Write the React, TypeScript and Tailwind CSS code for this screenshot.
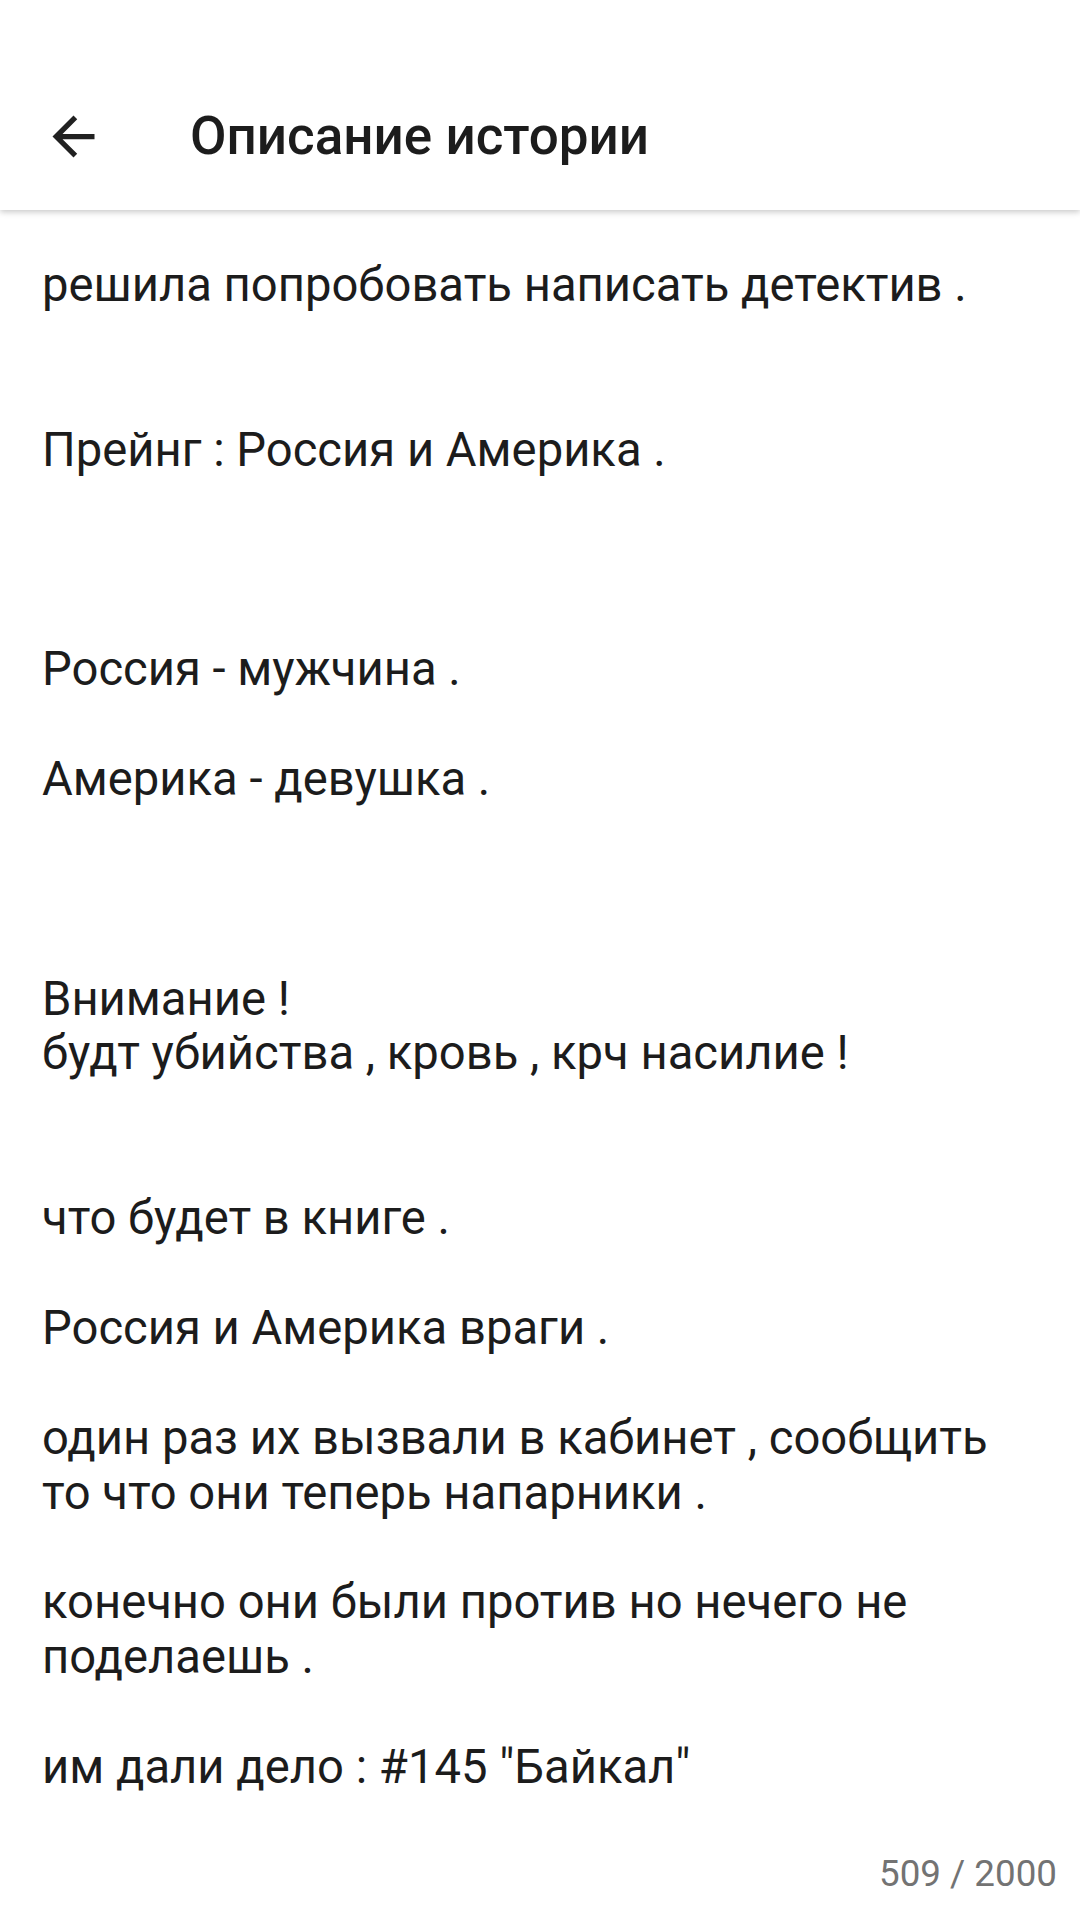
import React from "react";

const lines: string[] = [
  "решила попробовать написать детектив .",
  "",
  "",
  "Прейнг : Россия и Америка .",
  "",
  "",
  "",
  "Россия - мужчина .",
  "",
  "Америка - девушка .",
  "",
  "",
  "",
  "Внимание !",
  "будт убийства , кровь , крч насилие !",
  "",
  "",
  "что будет в книге .",
  "",
  "Россия и Америка враги .",
  "",
  "один раз их вызвали в кабинет , сообщить",
  "то что они теперь напарники .",
  "",
  "конечно они были против но нечего не",
  "поделаешь .",
  "",
  "им дали дело : #145 \"Байкал\"",
];

export default function App() {
  return (
    <div
      className="w-[1080px] h-[1920px] bg-white flex flex-col overflow-hidden"
      style={{ fontFamily: "Roboto, 'Noto Sans', sans-serif" }}
    >
      <header className="h-[210px] pt-[63px] bg-white shadow-[0_2px_6px_rgba(0,0,0,0.22)] relative z-10">
        <div className="h-[147px] flex items-center pl-[42px]">
          <div className="w-[63px] h-[63px] flex items-center justify-center">
            <svg width="63" height="63" viewBox="0 0 24 24" fill="#212121">
              <path d="M20 11H7.83l5.59-5.59L12 4l-8 8 8 8 1.41-1.41L7.83 13H20v-2z" />
            </svg>
          </div>
          <h1 className="ml-[85px] text-[53px] leading-none font-medium text-[#1c1c1c]">
            Описание истории
          </h1>
        </div>
      </header>
      <main className="flex-1 px-[42px] pt-[48px] flex flex-col">
        <div className="text-[47.2px] leading-[54.9px] text-[#1c1c1c]">
          {lines.map((l, i) => (
            <div key={i} className="h-[54.9px] whitespace-pre">
              {l || " "}
            </div>
          ))}
        </div>
        <div className="mt-[57px] self-end -mr-[19px] text-[36.75px] leading-[43px] text-[#737373]">
          509 / 2000
        </div>
      </main>
    </div>
  );
}
